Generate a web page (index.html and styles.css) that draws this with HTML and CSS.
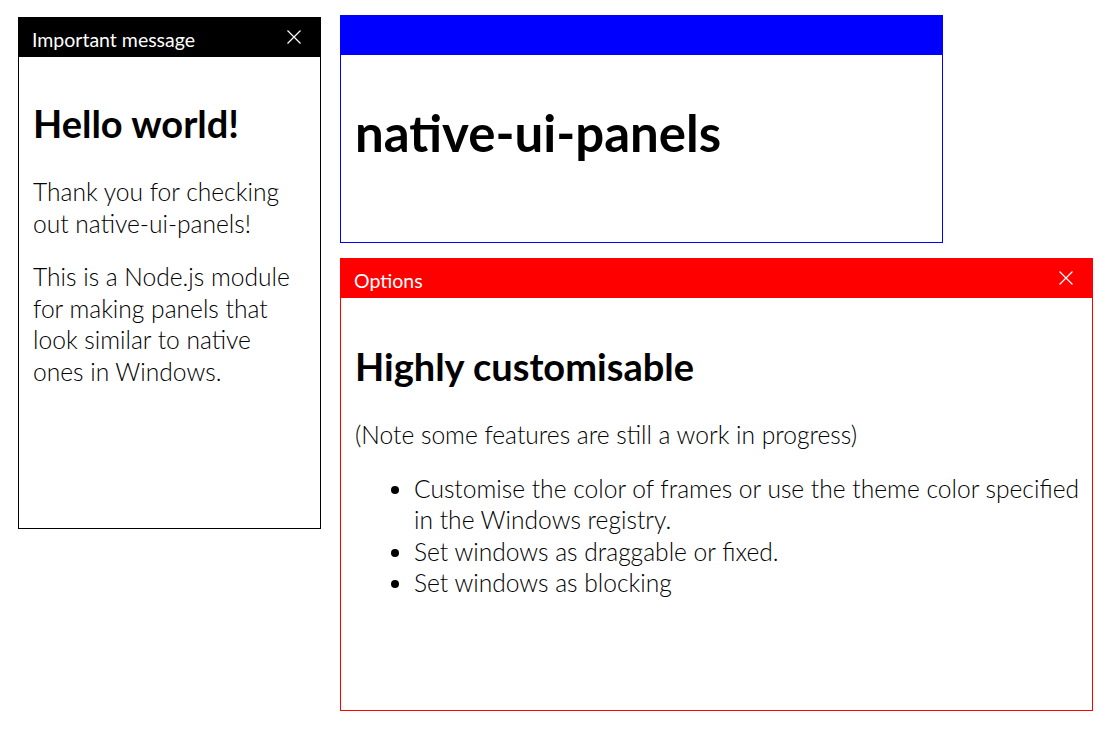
FILE: index.html
```html
<!DOCTYPE html>
<html lang="en">
<head>
  <meta charset="UTF-8" />
  <meta name="viewport" content="width=device-width, initial-scale=1.0"/>
  <title>native-ui-panels</title>
  <link rel="stylesheet" href="styles.css">
</head>
<body>
  <div class="panel panel-message">
    <div class="titlebar">
      <span class="title">Important message</span>
      <button class="close" aria-label="Close">
        <svg width="14" height="14" viewBox="0 0 14 14"><path d="M0.5 0.5L13.5 13.5M13.5 0.5L0.5 13.5"/></svg>
      </button>
    </div>
    <div class="content">
      <h1>Hello world!</h1>
      <p>Thank you for checking out native-ui-panels!</p>
      <p>This is a Node.js module for making panels that look similar to native ones in Windows.</p>
    </div>
  </div>

  <div class="panel panel-name">
    <div class="titlebar"></div>
    <div class="content">
      <h1 class="big">native-ui-panels</h1>
    </div>
  </div>

  <div class="panel panel-options">
    <div class="titlebar">
      <span class="title">Options</span>
      <button class="close" aria-label="Close">
        <svg width="14" height="14" viewBox="0 0 14 14"><path d="M0.5 0.5L13.5 13.5M13.5 0.5L0.5 13.5"/></svg>
      </button>
    </div>
    <div class="content">
      <h1>Highly customisable</h1>
      <p>(Note some features are still a work in progress)</p>
      <ul>
        <li>Customise the color of frames or use the theme color specified in the Windows registry.</li>
        <li>Set windows as draggable or fixed.</li>
        <li>Set windows as blocking</li>
      </ul>
    </div>
  </div>
</body>
</html>
```

FILE: styles.css
```css
body {
  margin: 0;
  background: #fff;
  font-family: Lato, "Open Sans", sans-serif;
  color: #000;
  position: relative;
  height: 100vh;
}

/* each panel is a window on the desktop */
.panel {
  position: absolute;
  box-sizing: border-box;
  border: 1px solid var(--frame);
  background: #fff;
  display: flex;
  flex-direction: column;
  overflow: hidden;
}

.panel-message {
  left: 18px;
  top: 17px;
  width: 303px;
  height: 512px;
  --frame: #000;
}

.panel-name {
  left: 340px;
  top: 15px;
  width: 603px;
  height: 228px;
  --frame: #00f;
}

.panel-options {
  left: 340px;
  top: 258px;
  width: 753px;
  height: 453px;
  --frame: #f00;
}

.titlebar {
  flex: none;
  height: 40px;
  margin: -1px -1px 0;
  padding: 0 20px 0 14px;
  background: var(--frame);
  color: #fff;
  display: flex;
  align-items: center;
  justify-content: space-between;
}

.title {
  padding-top: 5px;
  font-size: 19.5px;
  font-weight: 400;
}

.close {
  border: none;
  background: none;
  padding: 0;
  width: 14px;
  height: 14px;
  display: flex;
  cursor: pointer;
}

.close svg {
  stroke: #fff;
  stroke-width: 1.2;
  fill: none;
}

.content {
  padding: 0 14px;
}

.panel-options .content {
  padding-right: 6px;
}

h1 {
  margin: 41px 0 28px;
  font-size: 38px;
  line-height: 50px;
  font-weight: 700;
}

.panel-options h1 {
  margin-top: 43px;
}

h1.big {
  margin-top: 44px;
  font-size: 51px;
  line-height: 68px;
}

p,
ul {
  margin: 22px 0;
  font-size: 24.6px;
  line-height: 31.5px;
  font-weight: 300;
}

ul {
  padding-left: 59px;
}
```
